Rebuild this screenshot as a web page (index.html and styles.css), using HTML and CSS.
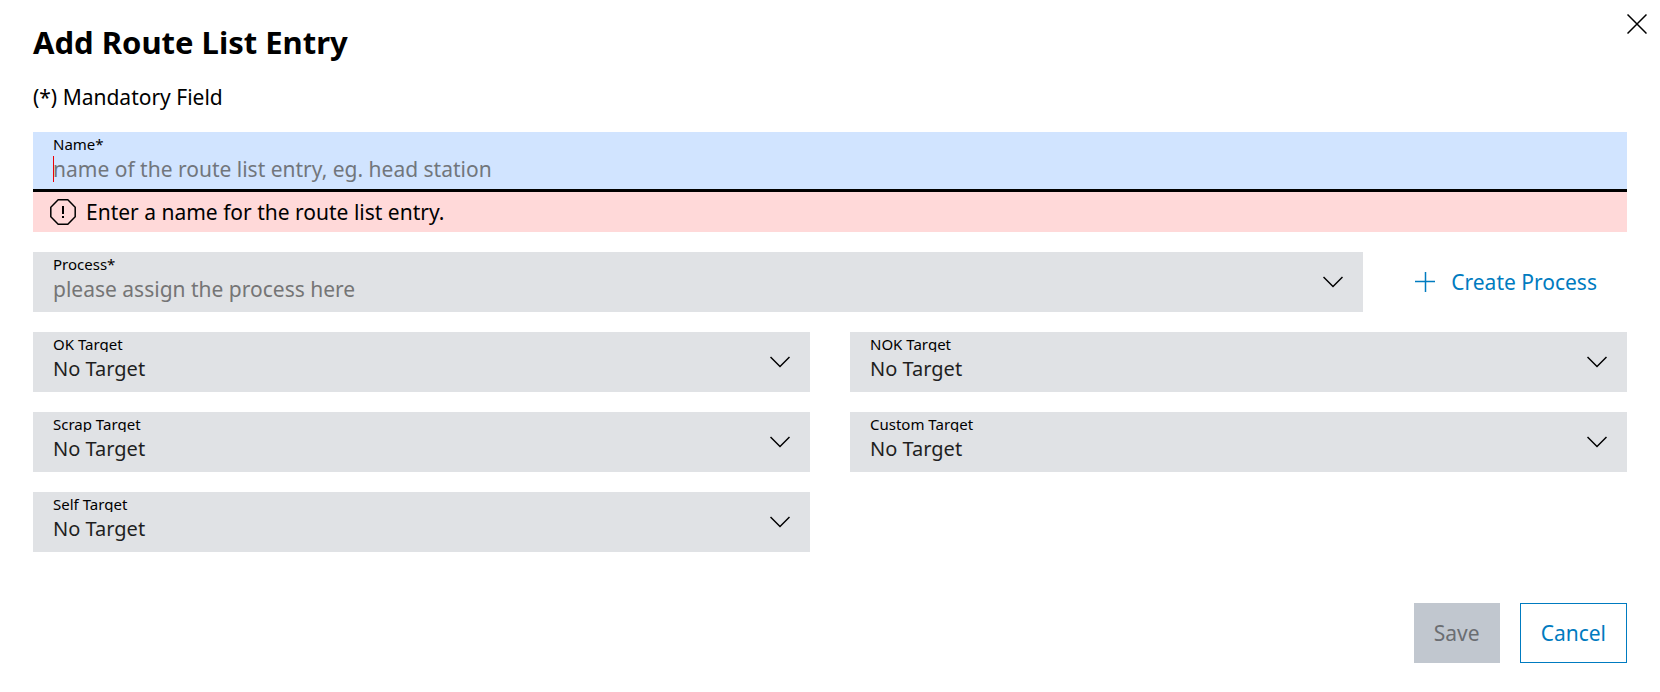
FILE: index.html
```html
<!DOCTYPE html>
<html lang="en">
<head>
    <meta charset="UTF-8">
    <meta name="viewport" content="width=device-width, initial-scale=1.0">
    <title>Add Route List Entry</title>
    <link rel="stylesheet" href="styles.css">
</head>
<body>

    <main class="dialog">
        <button type="button" class="close-button" aria-label="Close">
            <svg width="20" height="20" viewBox="0 0 20 20"><path d="M0.5 0.5L19.5 19.5M19.5 0.5L0.5 19.5"/></svg>
        </button>

        <h1>Add Route List Entry</h1>
        <p class="hint">(*) Mandatory Field</p>

        <form class="route-form">
            <div>
                <div class="field field-name">
                    <label for="name">Name*</label>
                    <input type="text" id="name" placeholder="name of the route list entry, eg. head station" autocomplete="off" aria-describedby="nameError" autofocus>
                </div>
                <div class="error" id="nameError">
                    <svg width="26" height="26" viewBox="0 0 26 26">
                        <path d="M8.2 0.8H17.8L25.2 8.2V17.8L17.8 25.2H8.2L0.8 17.8V8.2Z"/>
                        <path class="mark" d="M13 7V15M13 17V19"/>
                    </svg>
                    <span>Enter a name for the route list entry.</span>
                </div>
            </div>

            <div class="process-row">
                <div class="field">
                    <label for="process">Process*</label>
                    <select id="process" class="empty">
                        <option>please assign the process here</option>
                    </select>
                    <svg class="arrow" width="20" height="12" viewBox="0 0 20 12"><path d="M0.5 1L10 10.5L19.5 1"/></svg>
                </div>
                <button type="button" class="create-button">
                    <svg width="20" height="20" viewBox="0 0 20 20"><path d="M10.5 0V20M0 9.5H20"/></svg>
                    Create Process
                </button>
            </div>

            <div class="targets">
                <div class="field">
                    <label for="okTarget">OK Target</label>
                    <select id="okTarget">
                        <option>No Target</option>
                    </select>
                    <svg class="arrow" width="20" height="12" viewBox="0 0 20 12"><path d="M0.5 1L10 10.5L19.5 1"/></svg>
                </div>
                <div class="field">
                    <label for="nokTarget">NOK Target</label>
                    <select id="nokTarget">
                        <option>No Target</option>
                    </select>
                    <svg class="arrow" width="20" height="12" viewBox="0 0 20 12"><path d="M0.5 1L10 10.5L19.5 1"/></svg>
                </div>
                <div class="field">
                    <label for="scrapTarget">Scrap Target</label>
                    <select id="scrapTarget">
                        <option>No Target</option>
                    </select>
                    <svg class="arrow" width="20" height="12" viewBox="0 0 20 12"><path d="M0.5 1L10 10.5L19.5 1"/></svg>
                </div>
                <div class="field">
                    <label for="customTarget">Custom Target</label>
                    <select id="customTarget">
                        <option>No Target</option>
                    </select>
                    <svg class="arrow" width="20" height="12" viewBox="0 0 20 12"><path d="M0.5 1L10 10.5L19.5 1"/></svg>
                </div>
                <div class="field">
                    <label for="selfTarget">Self Target</label>
                    <select id="selfTarget">
                        <option>No Target</option>
                    </select>
                    <svg class="arrow" width="20" height="12" viewBox="0 0 20 12"><path d="M0.5 1L10 10.5L19.5 1"/></svg>
                </div>
            </div>

            <div class="actions">
                <button type="submit" class="save-button" disabled>Save</button>
                <button type="button" class="cancel-button">Cancel</button>
            </div>
        </form>
    </main>

</body>
</html>
```
FILE: styles.css
```css
/* General Styling */
* {
    box-sizing: border-box;
}

body {
    font-family: 'Noto Sans', sans-serif;
    font-size: 21px;
    line-height: 26px;
    color: #000;
    background: #fff;
    margin: 0;
}

svg {
    fill: none;
    stroke: currentColor;
    stroke-width: 1.5;
    flex: none;
}

input, select, button {
    font: inherit;
    border: none;
    border-radius: 0;
    outline: none;
    margin: 0;
}

button {
    cursor: pointer;
}

/* Dialog */
.dialog {
    position: relative;
    padding: 22px 33px;
}

.close-button {
    position: absolute;
    top: 0;
    right: 0;
    display: flex;
    padding: 14px 13px;
    color: #000;
    background: none;
}

h1 {
    font-size: 31px;
    line-height: 40px;
    margin: 0 0 22px;
}

.hint {
    margin: 0 0 22px;
}

.route-form {
    display: flex;
    flex-direction: column;
    gap: 20px;
}

/* Fields: the control fills the whole box, label and arrow lie on top */
.field {
    display: grid;
    grid-template-columns: 1fr 60px;
    grid-template-rows: 20px 40px;
    background: #e0e2e5;
}

.field label {
    grid-area: 1 / 1;
    z-index: 1;
    padding-left: 20px;
    font-size: 15px;
    line-height: 24px;
    pointer-events: none;
}

.field input,
.field select {
    grid-area: 1 / 1 / 3 / 3;
    width: 100%;
    padding: 22px 20px 8px;
    color: #1f1f1f;
    background: none;
    appearance: none;
}

.field select {
    font-size: 20px;
}

.field .empty {
    font-size: 21px;
    color: #757575;
}

.field .arrow {
    grid-area: 1 / 2 / 3 / 3;
    place-self: center;
    pointer-events: none;
}

.field-name {
    position: relative;
    background: #d1e4ff;
}

.field-name input {
    padding: 24px 20px 7px;
    border-bottom: 3px solid #000;
    caret-color: #ed0007;
}

.field-name input::placeholder {
    color: #71767c;
}

/* Caret of the empty field */
.field-name:has(input:placeholder-shown)::before {
    content: "";
    position: absolute;
    top: 24px;
    left: 20px;
    width: 1px;
    height: 26px;
    background: #ed0007;
}

.error {
    display: flex;
    align-items: center;
    gap: 10px;
    padding: 7px 17px;
    background: #ffd9d9;
}

.error .mark {
    stroke-width: 2;
}

/* Process row */
.process-row {
    display: flex;
    gap: 32px;
}

.process-row .field {
    flex: 1;
}

.create-button {
    display: flex;
    align-items: center;
    gap: 16px;
    padding: 0 30px 0 20px;
    color: #007bc0;
    background: none;
}

/* Target fields */
.targets {
    display: grid;
    grid-template-columns: 1fr 1fr;
    gap: 20px 40px;
}

.targets label {
    overflow: hidden;
}

/* Buttons */
.actions {
    display: flex;
    justify-content: flex-end;
    gap: 20px;
    margin-top: 31px;
}

.save-button,
.cancel-button {
    height: 60px;
    padding: 0 20px;
}

.save-button {
    color: #6b6e72;
    background: #c1c7cf;
    cursor: default;
}

.cancel-button {
    color: #007bc0;
    background: #fff;
    border: 1px solid #007bc0;
}

/* Responsive Design */
@media (max-width: 768px) {
    .targets {
        grid-template-columns: 1fr;
    }

    .process-row {
        flex-direction: column;
    }
}
```
